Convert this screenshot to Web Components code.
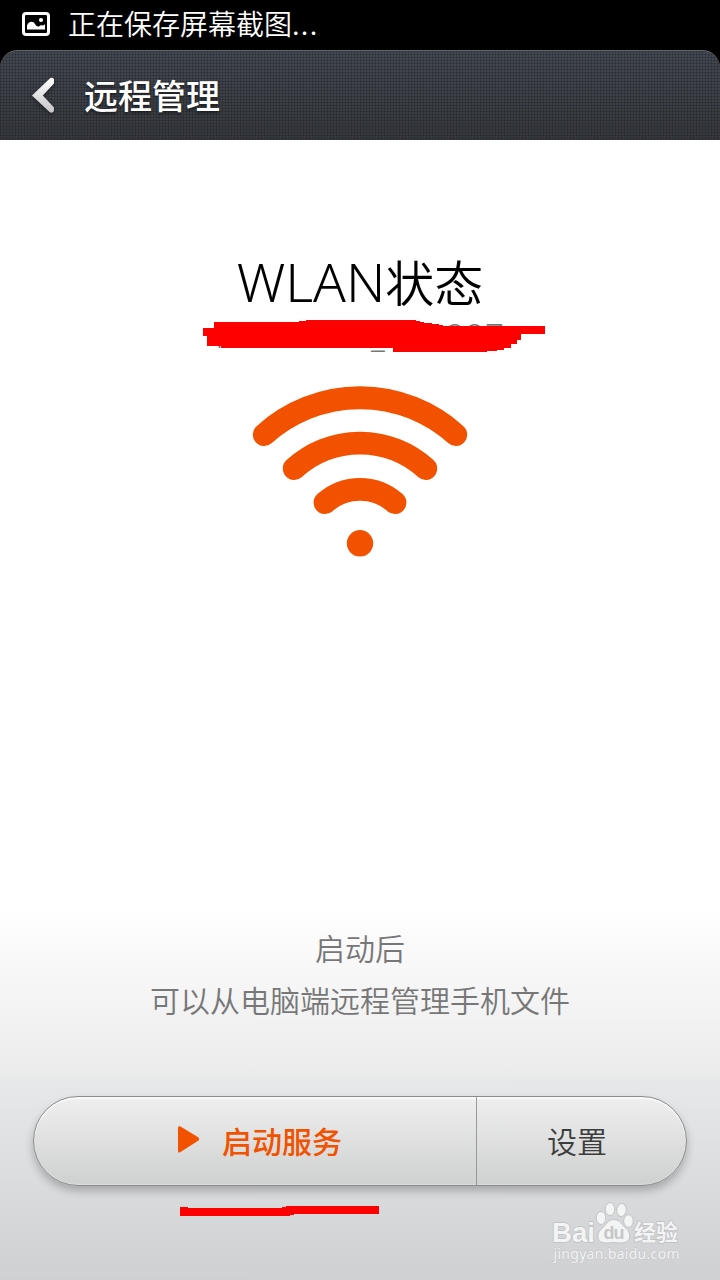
<!DOCTYPE html>
<html lang="zh-CN">
<head>
<meta charset="utf-8">
<title>远程管理</title>
<style>
body {
  margin: 0;
  background: #000;
  font-family: "Noto Sans CJK SC", sans-serif;
}
.latin {
  font-family: "Noto Sans", sans-serif;
  font-size: 54px;
  font-weight: 300;
  line-height: 1;
}
.dots { letter-spacing: 1.3px; }
</style>
</head>
<body>
<remote-app>
  <status-bar slot="status">正在保存屏幕截图<span class="dots">...</span></status-bar>
  <title-bar slot="title">远程管理</title-bar>
  <wlan-status>
    <span slot="heading"><span class="latin">WLAN</span>状态</span>
    <span slot="network">MERCURY_408887</span>
  </wlan-status>
  <service-hint slot="footer">
    <div>启动后</div>
    <div>可以从电脑端远程管理手机文件</div>
  </service-hint>
  <service-buttons slot="footer">
    <span slot="start">启动服务</span>
    <span slot="settings">设置</span>
  </service-buttons>
  <site-mark slot="mark"></site-mark>
</remote-app>

<script>
class BaseElement extends HTMLElement {
  constructor() {
    super();
    this.root = this.attachShadow({ mode: 'open' });
    this.root.innerHTML = `<style>${this.constructor.style}</style>${this.constructor.template}`;
  }
}

class RemoteApp extends BaseElement {
  static style = `
    :host {
      position: relative;
      display: flex;
      flex-direction: column;
      width: 720px;
      height: 1280px;
      overflow: hidden;
    }
    main {
      flex: 1;
      display: flex;
      flex-direction: column;
      justify-content: space-between;
      background: linear-gradient(#fff 0, #fff 765px, #ebeceb 930px, #e7e8ea 940px, #cfd0d2 1140px);
    }
    footer {
      display: flex;
      flex-direction: column;
      align-items: center;
      gap: 71px;
      padding-bottom: 94px;
    }
    .mark {
      position: absolute;
      left: 540px;
      top: 1190px;
    }
  `;
  static template = `
    <slot name="status"></slot>
    <slot name="title"></slot>
    <main>
      <slot></slot>
      <footer><slot name="footer"></slot></footer>
    </main>
    <div class="mark"><slot name="mark"></slot></div>
  `;
}

class StatusBar extends BaseElement {
  static style = `
    :host {
      display: flex;
      align-items: center;
      gap: 18px;
      box-sizing: border-box;
      height: 50px;
      padding: 0 0 2px 22px;
      background: #000;
      color: #fff;
      font-size: 28px;
      line-height: 46px;
      font-weight: 350;
    }
    svg { display: block; }
    .text { padding-bottom: 2px; }
  `;
  static template = `
    <svg width="28" height="24" viewBox="0 0 28 24">
      <rect x="1.5" y="1.5" width="25" height="21" rx="2.5" fill="none" stroke="#fff" stroke-width="3"/>
      <path d="M5 17.500V13.500Q6.500 9.800 9.500 9.800Q12 9.800 13 12Q14.500 15 17 14.500Q18.500 12.500 20.500 13.500Q21.500 13.500 23 12.300V17.500Z" fill="#fff"/>
      <circle cx="19" cy="8" r="2.100" fill="#fff"/>
    </svg>
    <div class="text"><slot></slot></div>
  `;
}

class TitleBar extends BaseElement {
  static style = `
    :host {
      display: flex;
      align-items: center;
      gap: 27px;
      box-sizing: border-box;
      height: 90px;
      padding: 0 0 1px 30px;
      border-top: 1px solid #65676b;
      border-radius: 18px 18px 0 0;
      background:
        repeating-linear-gradient(90deg, rgba(20, 24, 28, .28) 0 1px, transparent 1px 3px),
        repeating-linear-gradient(rgba(20, 24, 28, .28) 0 1px, transparent 1px 3px),
        linear-gradient(#444851, #36383c);
      color: #fff;
      font-size: 34px;
      font-weight: 500;
      line-height: 50px;
      text-shadow: 0 2px 3px rgba(0, 0, 0, .5);
    }
    svg {
      display: block;
      filter: drop-shadow(0 2px 2px rgba(0, 0, 0, .4));
    }
  `;
  static template = `
    <svg width="27" height="38" viewBox="0 0 27 38">
      <defs>
        <linearGradient id="g" x1="0" y1="0" x2="0" y2="1">
          <stop offset="0" stop-color="#fff"/>
          <stop offset="1" stop-color="#c4c4c8"/>
        </linearGradient>
      </defs>
      <path d="M19.500 2.700Q22 .8 24 3V7.500L12.800 19.500L24 31.500V35Q22 38 19.500 36L2 19.500Z" fill="url(#g)"/>
    </svg>
    <slot></slot>
  `;
}

class WlanStatus extends BaseElement {
  static style = `
    :host {
      display: flex;
      flex-direction: column;
      align-items: center;
      padding-top: 105px;
    }
    .heading {
      height: 74px;
      color: #000;
      font-size: 49px;
      line-height: 72px;
      font-weight: 350;
    }
    .network {
      position: relative;
      height: 36px;
      color: #777;
      font-family: "Noto Sans", sans-serif;
      font-size: 33px;
      line-height: 34px;
      font-weight: 300;
      letter-spacing: 1px;
    }
    .scribble {
      position: absolute;
      left: 50%;
      top: 0;
      margin-left: -157px;
    }
    .signal { margin-top: 29px; display: block; }
  `;
  static template = `
    <div class="heading"><slot name="heading"></slot></div>
    <div class="network">
      <slot name="network"></slot>
      <svg class="scribble" width="342" height="34" viewBox="203 319 342 34">
        <path fill="#f00" d="M203 328H214V322H299V321H306V320H416V321H420V322H424V323H432V324H439V325H443V326H545V334H521V340H517V344H511V348H504V350H497V351H487V352H393V348H221V346H207V336H203Z"/>
      </svg>
    </div>
    <svg class="signal" width="216" height="174" viewBox="252 384 216 174">
      <g fill="none" stroke="#f25100" stroke-width="22.800" stroke-linecap="round">
        <path d="M264.200 434.600A143 143 0 0 1 455.800 434.600"/>
        <path d="M294.200 468.500A97.800 97.800 0 0 1 425.800 468.500"/>
        <path d="M325 502.600A53 53 0 0 1 395 502.600"/>
      </g>
      <circle cx="360" cy="543.300" r="13.200" fill="#f25100"/>
    </svg>
  `;
}

class ServiceHint extends BaseElement {
  static style = `
    :host {
      display: block;
      color: #777;
      font-size: 30px;
      line-height: 52px;
      font-weight: 350;
      text-align: center;
    }
  `;
  static template = `<slot></slot>`;
}

class ServiceButtons extends BaseElement {
  static style = `
    :host {
      position: relative;
      display: flex;
      box-sizing: border-box;
      width: 654px;
      height: 90px;
      border: 1px solid #8b8c8c;
      border-radius: 45px;
      background: linear-gradient(#eeefee, #cfd0d0);
      box-shadow: inset 0 2px 1px #fafafa, inset 0 -1px 1px #dcdcdc, 0 5px 8px rgba(0, 0, 0, .24);
      font-size: 30px;
      line-height: 86px;
    }
    .start {
      display: flex;
      align-items: flex-start;
      box-sizing: border-box;
      width: 443px;
      padding-left: 143px;
      gap: 22px;
      border-right: 1px solid #999;
      color: #f25100;
      font-weight: 500;
    }
    .start svg { margin-top: 28px; }
    .settings {
      flex: 1;
      padding-right: 9px;
      text-align: center;
      color: #3c3c3c;
      font-weight: 350;
    }
    .underline {
      position: absolute;
      left: 146px;
      top: 108px;
    }
  `;
  static template = `
    <div class="start">
      <svg width="23" height="29" viewBox="0 0 23 29">
        <path d="M1 3Q1 .5 3.500 1.500L21.500 12.500Q23 14 21.500 15.500L3.500 27Q1 28.500 1 26Z" fill="#f25100"/>
      </svg>
      <slot name="start"></slot>
    </div>
    <div class="settings"><slot name="settings"></slot></div>
    <svg class="underline" width="199" height="11" viewBox="180 1205 199 11">
      <path fill="#f00" d="M180 1207H188V1208H282V1207H286V1206H379V1214H294V1215H290V1216H180Z"/>
    </svg>
  `;
}

class SiteMark extends BaseElement {
  static style = `
    :host { display: block; }
    svg { display: block; }
    text { paint-order: stroke; stroke: #bfc0c2; stroke-linejoin: round; fill: #f3f4f4; }
  `;
  static template = `
    <svg width="160" height="85" viewBox="0 0 160 85">
      <g fill="#f3f4f4" stroke="#c2c3c5" stroke-width="1">
        <ellipse cx="61" cy="28" rx="4.800" ry="6.500"/>
        <ellipse cx="70" cy="19" rx="4.800" ry="6.500"/>
        <ellipse cx="81.500" cy="20" rx="4.800" ry="6.500" transform="rotate(8 81.500 20)"/>
        <ellipse cx="88.500" cy="31" rx="4.800" ry="6.300"/>
        <path d="M74 29.500C80 29.500 82 35 86 38.500C92 43 91 53 82 53C77 53 77 52.500 74 52.500C71 52.500 70 53 66 53C56 53 56 43 62 38.500C66 35 68 29.500 74 29.500Z"/>
      </g>
      <text x="12" y="52" font-family="Liberation Sans" font-size="28" font-weight="700" textLength="43" lengthAdjust="spacingAndGlyphs" stroke-width="1.500">Bai</text>
      <text x="63.500" y="49" font-family="Liberation Sans" font-size="18" font-weight="700" textLength="21" style="fill:#c5c6c8;stroke:none">du</text>
      <text x="94" y="50" font-family="Noto Sans CJK SC" font-size="22" font-weight="700" textLength="44" stroke-width="1.500">经验</text>
      <text x="13.500" y="69" font-family="Noto Sans" font-size="14" textLength="126" stroke-width=".8">jingyan.baidu.com</text>
    </svg>
  `;
}

customElements.define('status-bar', StatusBar);
customElements.define('title-bar', TitleBar);
customElements.define('wlan-status', WlanStatus);
customElements.define('service-hint', ServiceHint);
customElements.define('service-buttons', ServiceButtons);
customElements.define('site-mark', SiteMark);
customElements.define('remote-app', RemoteApp);
</script>
</body>
</html>
